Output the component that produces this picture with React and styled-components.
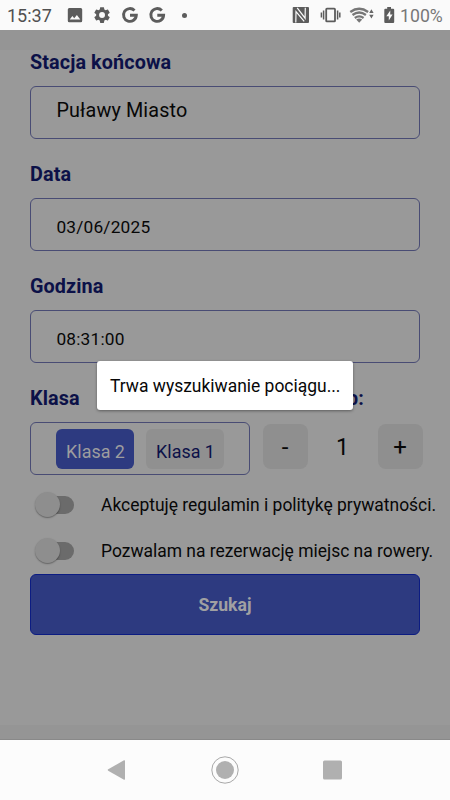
import * as React from 'react'
import styled, { createGlobalStyle } from 'styled-components'

const NAVY = '#0c1148'
const BLUE = '#2d3a80'

export default function App() {
  return (
    <Root>
      <GlobalStyle />
      <StatusBar />
      <Screen>
        <Form>
          <Field label="Stacja końcowa">
            <Box>
              <Value size={19.8} y={-2.5} spacing={0.13}>
                Puławy Miasto
              </Value>
            </Box>
          </Field>
          <Field label="Data">
            <Box>
              <Value size={17.3} y={2.5} spacing={0.2}>
                03/06/2025
              </Value>
            </Box>
          </Field>
          <Field label="Godzina">
            <Box>
              <Value size={17.3} y={2.5} spacing={0.2}>
                08:31:00
              </Value>
            </Box>
          </Field>
          <Columns>
            <Field label="Klasa">
              <Box>
                <Chip active={true}>Klasa 2</Chip>
                <Chip>Klasa 1</Chip>
              </Box>
            </Field>
            <Field label="Ilość osób:" indent={3.5}>
              <Stepper>
                <StepButton>-</StepButton>
                <Count>1</Count>
                <StepButton>+</StepButton>
              </Stepper>
            </Field>
          </Columns>
          <Consent>Akceptuję regulamin i politykę prywatności.</Consent>
          <Consent>Pozwalam na rezerwację miejsc na rowery.</Consent>
          <Submit>Szukaj</Submit>
        </Form>
        <Dialog>Trwa wyszukiwanie pociągu...</Dialog>
      </Screen>
      <NavBar />
    </Root>
  )
}

function Field({ label, indent = 0, children }) {
  return (
    <FieldRoot>
      <Label indent={indent}>{label}</Label>
      {children}
    </FieldRoot>
  )
}

function Consent({ children }) {
  return (
    <ConsentRow>
      <Track>
        <Thumb />
      </Track>
      <ConsentText>{children}</ConsentText>
    </ConsentRow>
  )
}

function StatusBar() {
  return (
    <StatusRoot>
      <Clock>15:37</Clock>
      <svg width="125" height="30" viewBox="0 0 125 30" fill="#5c5c5c">
        {/* picture */}
        <path
          fillRule="evenodd"
          d="M9.300 8h11.400a1.500 1.500 0 0 1 1.500 1.500v11.200a1.500 1.500 0 0 1-1.500 1.500H9.300a1.500 1.500 0 0 1-1.500-1.500V9.500A1.500 1.500 0 0 1 9.300 8zM9.700 19.500h10.600l-3.400-4.600-2.700 3.400-1.800-2.200z"
        />
        {/* settings */}
        <g transform="translate(32.200 5.200) scale(.82)">
          <path d="M19.140 12.940c.040-.300.060-.610.060-.940s-.020-.640-.070-.940l2.030-1.580a.49.49 0 0 0 .12-.61l-1.920-3.320a.49.49 0 0 0-.59-.22l-2.390.96c-.5-.38-1.030-.7-1.620-.94l-.36-2.540a.48.48 0 0 0-.48-.41h-3.840a.47.47 0 0 0-.47.41l-.36 2.540c-.59.24-1.130.57-1.620.94l-2.390-.96a.48.48 0 0 0-.59.22L2.740 8.870a.47.47 0 0 0 .12.61l2.030 1.580c-.05.3-.09.63-.09.94s.02.64.07.94l-2.030 1.580a.49.49 0 0 0-.12.61l1.920 3.320c.12.22.37.29.59.22l2.390-.96c.5.38 1.030.7 1.620.94l.36 2.540c.05.24.24.41.48.41h3.840c.24 0 .44-.17.47-.41l.36-2.540c.59-.24 1.130-.56 1.620-.94l2.390.96c.22.08.47 0 .59-.22l1.920-3.320a.47.47 0 0 0-.12-.61zM12 15.600a3.600 3.600 0 1 1 0-7.200 3.600 3.600 0 0 1 0 7.200z" />
        </g>
        <GoogleMark x={62.3} />
        <GoogleMark x={89.6} />
      </svg>
      <Dot />
      <svg width="110" height="30" viewBox="0 0 110 30" fill="#5c5c5c">
        {/* nfc */}
        <rect x="2.700" y="7" width="16.300" height="16" rx="1" />
        <path
          d="M5.800 22.500L6 11.600l8.200 9.800M7.200 7.800l7.900 10.400.2-10.400"
          stroke="#fafafa"
          strokeWidth="1.200"
          fill="none"
        />
        {/* vibrate */}
        <rect
          x="36.200"
          y="8.700"
          width="8.800"
          height="12.700"
          rx="0.700"
          stroke="#5c5c5c"
          strokeWidth="1.800"
          fill="none"
        />
        <path
          d="M33.600 10.400v9.200M31.400 12.500v5M47.600 10.400v9.200M49.800 12.500v5"
          stroke="#5c5c5c"
          strokeWidth="1.500"
        />
        {/* wifi */}
        <g stroke="#777" strokeWidth="2.300" fill="none">
          <path d="M60.300 12q8.900-6.400 17.800 0" />
          <path d="M62.500 15q6.700-4.900 13.400 0" />
          <path d="M64.800 18q4.400-3.200 8.800 0" />
        </g>
        <path d="M66.200 19.400q3-2 6 0l-3 3.400z" fill="#777" />
        <path d="M79.200 13l2.200-3.800 2.200 3.800zM79.200 14.800l2.200 3.800 2.200-3.800z" fill="#666" />
        {/* battery */}
        <path d="M97.200 7h3.800v1.700h2.200q1 0 1 1v12.300q0 1-1 1h-7.900q-1 0-1-1V9.700q0-1 1-1h1.900z" />
        <path d="M100.300 10.500l-4 5.800h2.500v4.200l3.800-6h-2.400z" fill="#fafafa" />
      </svg>
      <Percent>100%</Percent>
    </StatusRoot>
  )
}

function GoogleMark({ x }) {
  return (
    <path
      d="M12.200 3.200A6.400 6.400 0 1 0 14 8H7.700"
      transform={`translate(${x} 7.300)`}
      stroke="#5c5c5c"
      strokeWidth="2.900"
      fill="none"
    />
  )
}

function NavBar() {
  return (
    <NavRoot>
      <svg width="28" height="28" viewBox="0 0 28 28" fill="#b0b0b0">
        <path d="M4.200 13.300L20 4.300q1-.4 1 .7v18q0 1.100-1 .7L4.200 14.700q-1-.7 0-1.400z" />
      </svg>
      <svg width="28" height="28" viewBox="0 0 28 28" fill="#b0b0b0">
        <circle cx="14" cy="14" r="9" />
        <circle cx="14" cy="14" r="13.200" fill="none" stroke="#a8a8a8" />
      </svg>
      <svg width="28" height="28" viewBox="0 0 28 28" fill="#b0b0b0">
        <rect x="4" y="4.500" width="19" height="19" rx="1.500" />
      </svg>
    </NavRoot>
  )
}

const GlobalStyle = createGlobalStyle`
  * {
    box-sizing: border-box;
  }
  body {
    margin: 0;
    font-family: Roboto, sans-serif;
    color: #070707;
  }
  svg {
    display: block;
    flex: none;
  }
`

const Root = styled.div`
  width: 450px;
  height: 800px;
  display: flex;
  flex-direction: column;
  overflow: hidden;
  background: #fcfcfc;
`

const StatusRoot = styled.div`
  height: 30px;
  display: flex;
  align-items: center;
  background: #fafafa;
  font-size: 18px;
  line-height: 30px;
`

const Clock = styled.span`
  width: 60px;
  padding: 2px 0 0 7px;
  flex: none;
  color: #505050;
`

const Dot = styled.span`
  width: 5px;
  height: 5px;
  margin: 0 103px 0 -3px;
  flex: none;
  border-radius: 50%;
  background: #5c5c5c;
`

const Percent = styled.span`
  padding-top: 2px;
  font-size: 17.700px;
  color: #777;
`

const Screen = styled.main`
  position: relative;
  height: 710px;
  padding: 20px 0 15px;
  background: #959595;
  border-bottom: 1px solid #898989;
`

const Form = styled.div`
  height: 675px;
  padding: 0 30px;
  background: #999;
`

const FieldRoot = styled.div`
  height: 112px;
`

const Label = styled.div`
  height: 36px;
  padding-top: 1px;
  padding-left: ${(props) => props.indent}px;
  font-size: 19.800px;
  font-weight: 700;
  letter-spacing: 0.1px;
  line-height: 24px;
  white-space: nowrap;
  color: ${NAVY};
`

const Box = styled.div`
  height: 53px;
  display: flex;
  align-items: center;
  gap: 12px;
  padding-left: 25px;
  border: 1px solid #494c74;
  border-radius: 6px;
`

const Value = styled.span`
  padding-top: ${(props) => Math.max(props.y * 2, 0)}px;
  padding-bottom: ${(props) => Math.max(props.y * -2, 0)}px;
  padding-left: 0.400px;
  font-size: ${(props) => props.size}px;
  letter-spacing: ${(props) => props.spacing}px;
`

const Columns = styled.div`
  display: grid;
  grid-template-columns: 220px 160px;
  column-gap: 12.500px;
`

const Chip = styled.div`
  width: 78px;
  height: 40px;
  padding: 3px 0 0 1px;
  border-radius: 6px;
  background: ${(props) => (props.active ? BLUE : '#909090')};
  color: ${(props) => (props.active ? '#9d9d9f' : NAVY)};
  font-size: 17.900px;
  line-height: 40px;
  text-align: center;
`

const Stepper = styled.div`
  display: flex;
  justify-content: space-between;
  padding-top: 2px;
`

const StepButton = styled.div`
  width: 45px;
  height: 45px;
  border-radius: 8px;
  background: #8f8f8f;
  font-size: 24px;
  line-height: 47px;
  text-align: center;
`

const Count = styled.div`
  font-size: 23px;
  line-height: 48px;
`

const ConsentRow = styled.div`
  height: 46px;
  display: flex;
  align-items: center;
  margin-right: -30px;

  ${Columns} + & {
    margin-top: -16px;
  }
`

const Track = styled.div`
  width: 35px;
  height: 18px;
  margin: 0 27px 1px 9px;
  flex: none;
  display: flex;
  align-items: center;
  border-radius: 9px;
  background: #6b6b6b;
`

const Thumb = styled.div`
  width: 25px;
  height: 25px;
  margin-left: -4.500px;
  border-radius: 50%;
  background: #8e8e8e;
  box-shadow: 0 1px 1.500px rgba(0, 0, 0, 0.35);
`

const ConsentText = styled.span`
  font-size: 17.470px;
  white-space: nowrap;
`

const Submit = styled.div`
  height: 61px;
  border: 1px solid #0c1c82;
  border-radius: 6px;
  background: ${BLUE};
  color: #a0a0a2;
  font-size: 17.600px;
  font-weight: 700;
  line-height: 61px;
  text-align: center;
`

const Dialog = styled.div`
  position: absolute;
  top: 331px;
  left: 97px;
  width: 256px;
  height: 49px;
  padding-left: 13px;
  border-radius: 3px;
  background: #fff;
  box-shadow: 0 1px 3px rgba(0, 0, 0, 0.4);
  font-size: 17.450px;
  line-height: 50px;
  white-space: nowrap;
`

const NavRoot = styled.nav`
  height: 60px;
  display: flex;
  align-items: center;
  justify-content: center;
  gap: 79.500px;
`
